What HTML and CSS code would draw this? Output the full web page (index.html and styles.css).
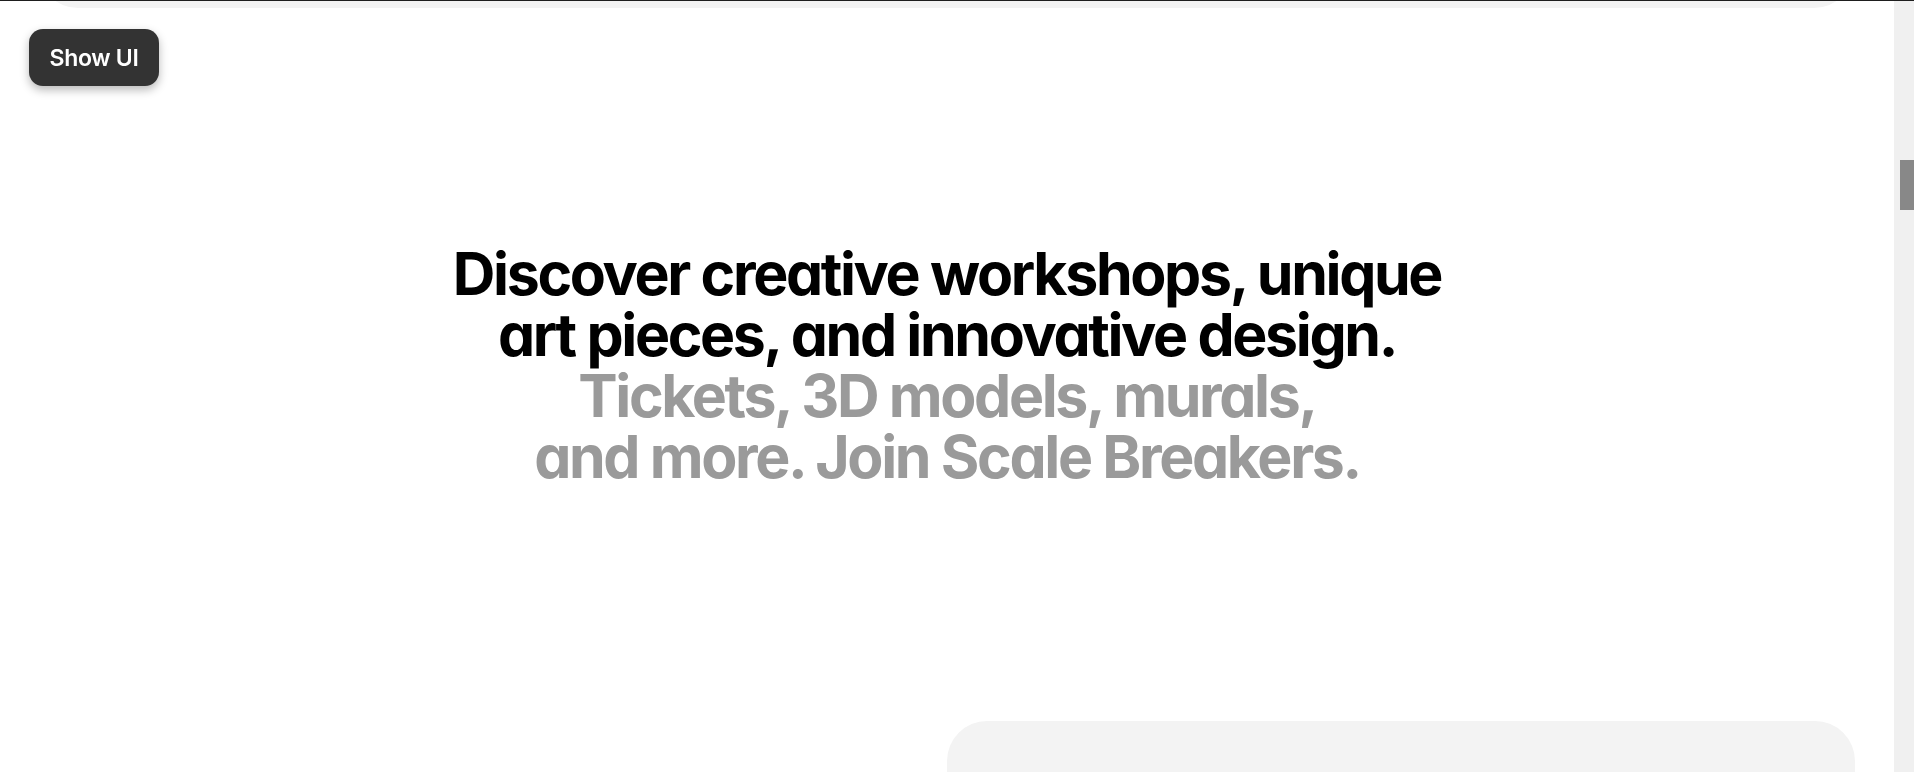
FILE: index.html
```html
<!DOCTYPE html>
<html lang="en">
<head>
<meta charset="utf-8">
<title>Scale Breakers</title>
<link rel="stylesheet" href="styles.css">
</head>
<body>
<div class="topline"></div>
<div class="scrollbar"><div class="scrollbar-thumb"></div></div>
<button class="show-ui" type="button">Show UI</button>
<main class="page">
  <section class="card card-top"></section>
  <section class="hero">
    <h1 class="hero-title">
      <span class="dark">Discover creative workshops, unique<br>art pieces, and innovative design.</span><br>
      <span class="muted">Tickets, 3D models, murals,<br>and more. Join Scale Breakers.</span>
    </h1>
  </section>
  <section class="lower">
    <div class="card card-bottom"></div>
  </section>
</main>
</body>
</html>
```

FILE: styles.css
```css
html {
  scroll-snap-type: y mandatory;
}
body {
  margin: 0;
  background: #ffffff;
  font-family: Inter, "Liberation Sans", sans-serif;
}
.topline {
  position: fixed;
  top: 0;
  left: 0;
  right: 0;
  height: 1px;
  background: #1e1e1e;
  z-index: 6;
}
.scrollbar {
  position: fixed;
  top: 0;
  right: 0;
  bottom: 0;
  width: 20px;
  background: #f0f0f0;
  z-index: 5;
}
.scrollbar-thumb {
  position: absolute;
  top: 160px;
  right: 0;
  width: 14px;
  height: 50px;
  background: #888888;
}
.show-ui {
  position: fixed;
  top: 29px;
  left: 29px;
  z-index: 4;
  width: 130px;
  height: 57px;
  border: 0;
  border-radius: 14px;
  background: #333333;
  color: #ffffff;
  font-family: Inter, "Liberation Sans", sans-serif;
  font-weight: 600;
  font-size: 23px;
  letter-spacing: -0.3px;
  box-shadow: 0 4px 10px rgba(0, 0, 0, 0.28);
  cursor: pointer;
}
.page {
  display: flex;
  flex-direction: column;
  margin-right: 20px;
}
.card {
  background: #f3f3f3;
  border-radius: 40px;
}
.card-top {
  margin: 0 40px 0 38px;
  height: 2478px;
}
.hero {
  margin-top: -8px;
  scroll-snap-align: start;
  height: 721px;
  box-sizing: border-box;
  padding-top: 243px;
  display: flex;
  justify-content: center;
}
.hero-title {
  margin: 0;
  text-align: center;
  font-family: Inter, "Liberation Sans", sans-serif;
  font-feature-settings: "cv11" 1;
  font-weight: 700;
  font-size: 59px;
  line-height: 61px;
  letter-spacing: -0.04em;
}
.dark {
  color: #000000;
}
.muted {
  color: #9a9a9a;
}
.lower {
  display: flex;
  justify-content: flex-end;
  padding-right: 39px;
}
.card-bottom {
  width: 908px;
  height: 8729px;
}
```
